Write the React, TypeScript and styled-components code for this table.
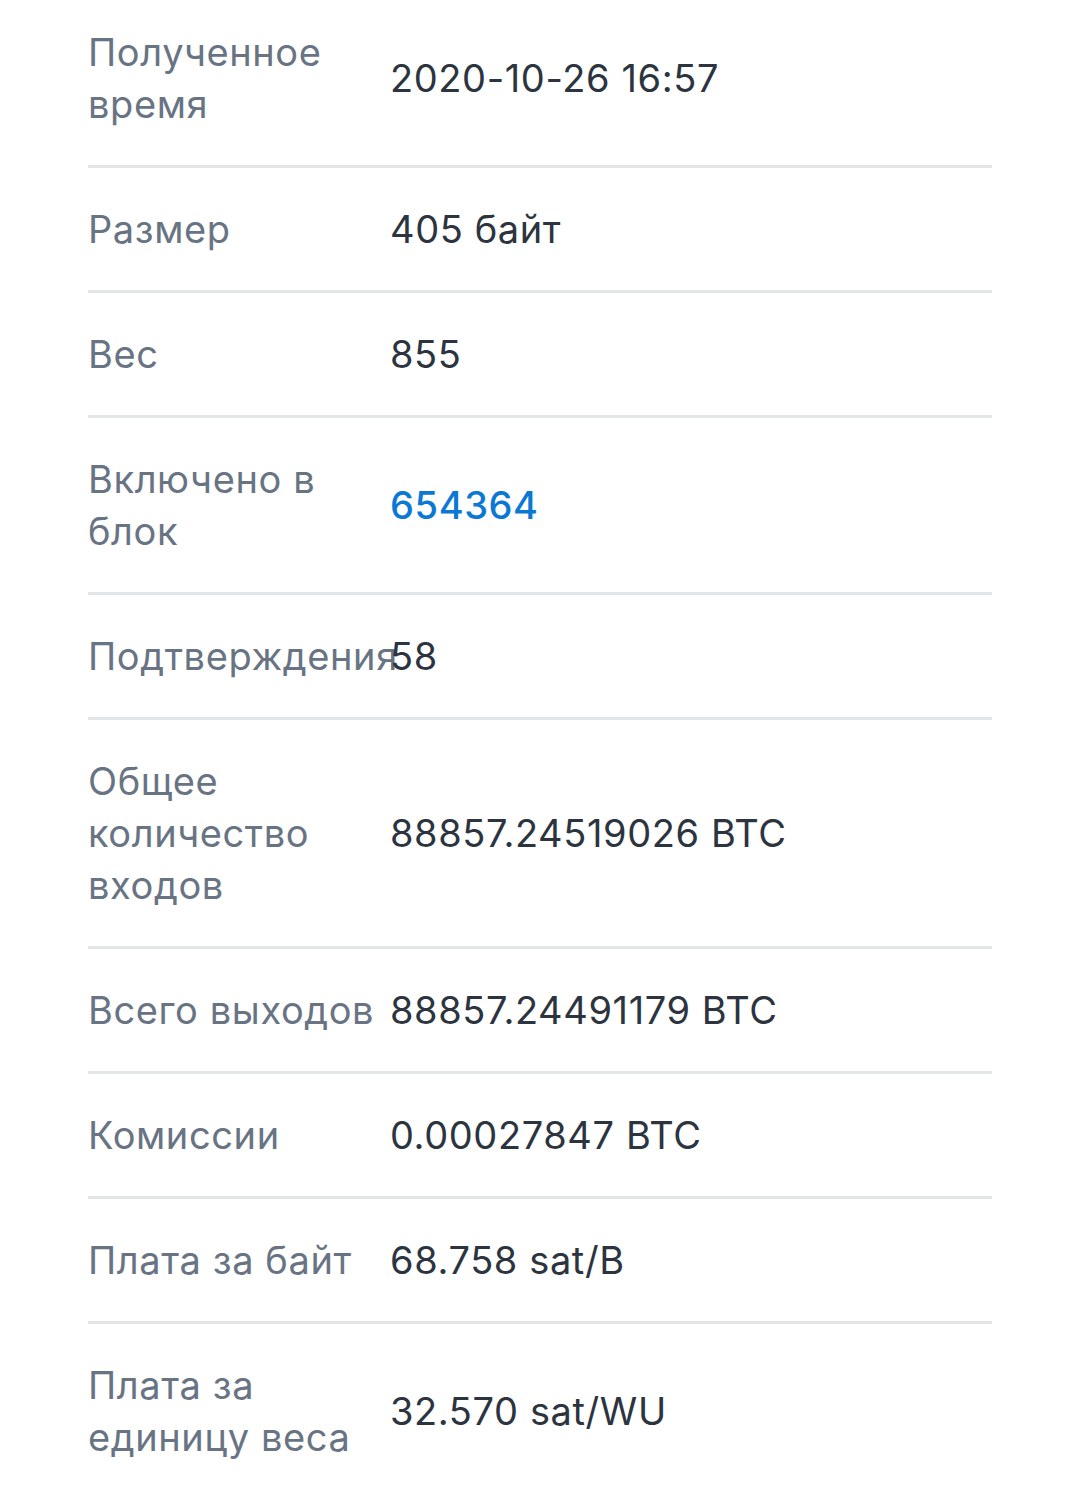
import React from 'react';
import styled, { createGlobalStyle } from 'styled-components';

interface Detail {
    label: string;
    value: string;
    link?: boolean;
}

const details: Detail[] = [
    { label: 'Полученное время', value: '2020-10-26 16:57' },
    { label: 'Размер', value: '405 байт' },
    { label: 'Вес', value: '855' },
    { label: 'Включено в блок', value: '654364', link: true },
    { label: 'Подтверждения', value: '58' },
    { label: 'Общее количество входов', value: '88857.24519026 BTC' },
    { label: 'Всего выходов', value: '88857.24491179 BTC' },
    { label: 'Комиссии', value: '0.00027847 BTC' },
    { label: 'Плата за байт', value: '68.758 sat/B' },
    { label: 'Плата за единицу веса', value: '32.570 sat/WU' },
];

const GlobalStyle = createGlobalStyle`
  html, body {
    margin: 0;
    padding: 0;
    background: #ffffff;
    overflow: hidden;
  }
  body {
    font-family: Inter, "Noto Sans", "Liberation Sans", sans-serif;
    -webkit-font-smoothing: antialiased;
  }
`;

const DetailList = styled.div`
  margin-top: -9px;
  padding: 0 88px;
`;

const Row = styled.div`
  display: grid;
  grid-template-columns: 302px 1fr;
  align-items: center;
  padding: 35px 0;
  border-bottom: 3px solid #e2e6e9;
  font-size: 38px;
  line-height: 52px;
  letter-spacing: 0.6px;
`;

// long single words spill under the value, as in the app
const Label = styled.div`
  color: #687483;
  min-width: 0;
  overflow: visible;
`;

const Value = styled.div<{ $link?: boolean }>`
  color: ${props => props.$link ? '#0a78d4' : '#2c3440'};
  font-weight: ${props => props.$link ? 500 : 400};
`;

export default function App() {
    return (
        <>
            <GlobalStyle />
            <DetailList>
                {details.map(d => (
                    <Row key={d.label}>
                        <Label>{d.label}</Label>
                        <Value $link={d.link}>{d.value}</Value>
                    </Row>
                ))}
            </DetailList>
        </>
    );
}
